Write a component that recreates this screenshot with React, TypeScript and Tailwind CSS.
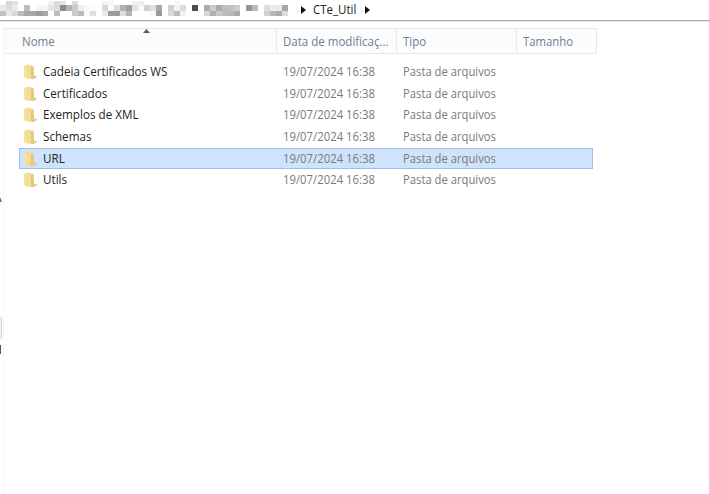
import React from "react";

type Row = { name: string; selected?: boolean };

const rows: Row[] = [
  { name: "Cadeia Certificados WS" },
  { name: "Certificados" },
  { name: "Exemplos de XML" },
  { name: "Schemas" },
  { name: "URL", selected: true },
  { name: "Utils" },
];

// Grey levels of the obscured part of the path, one string of hex pairs per line.
const mosaic = [
  "ff d8 e2 ff ff ff ff ff f2 dc e4 ff dd ff ff ff ff f4 f6 ff ff ff f2 ee ff ff ff ff ff f8 ff ff ff ff ff ff ff ff ff ff ff ff ff ff ff ff ff ff",
  "e8 de ea ff bc ff f4 f6 e6 dc 8a b4 cc ee f6 fa ff d8 fa dc b2 a0 e2 f8 d0 e0 a8 ff d2 f2 dc ff 4c ff ac cc aa be c2 cc ff 98 ba ff dd ec ea a8",
  "c0 e8 d8 ba a8 a8 9c a8 ff bc ff ff cc bc fa de ff ea 9a 9c de b4 ff ff ff f8 98 ff d8 bc f2 ff ff ff d6 b0 c8 bc b8 aa ff ff ff ff d0 b8 ac dc",
].map((line) => line.split(" "));

const mosaicHeights = ["flex h-1", "flex h-1.5", "flex h-[5px]"];

function Folder() {
  return (
    <svg className="h-4 w-[14.5px] shrink-0" viewBox="0 0 14.5 16">
      <defs>
        <linearGradient id="front" x1="0" x2="1">
          <stop offset="0" stopColor="#f5e4a0" />
          <stop offset="1" stopColor="#f0d987" />
        </linearGradient>
        <linearGradient id="back" x1="0" x2="0" y1="0" y2="1">
          <stop offset="0" stopColor="#f3e2a5" />
          <stop offset="1" stopColor="#e8ca62" />
        </linearGradient>
      </defs>
      <path d="M8 15 12.400 11.200l1.700 1.200-.8 1.400-3.600 1.400z" fill="#c6cacd" />
      <path d="M4 .8 9.600 1.300v12L6 14.500z" fill="url(#back)" />
      <path d="M7.500 3 10.800 2.200v11.600L7.500 15z" fill="#e0c987" />
      <path d="M8.300 8.500 11 8v5.400L8.300 14.600z" fill="#edcc50" />
      <path d="M1 2 5 .5l1.600 1.300V15.200L1 13.400z" fill="url(#front)" />
      <path d="M6.900 4v10.800" stroke="#fff2c4" strokeWidth=".7" />
    </svg>
  );
}

function Chevron() {
  return (
    <svg className="h-[8px] w-[5px]" viewBox="0 0 5 8">
      <path d="M0 0 5 4 0 8z" fill="#111" />
    </svg>
  );
}

export default function App() {
  return (
    <div className="flex h-[494px] w-[709px] flex-col overflow-hidden bg-white font-['Open_Sans','Noto_Sans',sans-serif] text-[12px] text-[#222]">
      <header className="flex h-[20px] shrink-0 items-start">
        <div className="w-[288px] pt-px">
          {mosaic.map((line, y) => (
            <div key={y} className={mosaicHeights[y]}>
              {line.map((c, x) => (
                <span key={x} className="h-full w-1.5" style={{ backgroundColor: `#${c}${c}${c}` }} />
              ))}
            </div>
          ))}
        </div>
        <div className="flex h-[19px] items-center pl-[13px]">
          <Chevron />
          <span className="ml-[7px] w-[52px] origin-left scale-x-[0.96] whitespace-nowrap">CTe_Util</span>
          <Chevron />
        </div>
      </header>
      <div className="h-[2px] shrink-0 border-t border-[#acacac] bg-[#e4e4e4]" />
      <div className="flex flex-1">
        <aside className="flex w-1 shrink-0 flex-col border-r border-[#f5f5f5]">
          <span className="-ml-[6px] mt-[168px] block h-4 leading-4">A</span>
          <span className="mt-[111px] h-[22px] w-[2px] border-y border-r border-[#dadada] bg-[#eee]" />
          <span className="mt-[6px] h-[9px] w-px bg-[#315f8d]" />
        </aside>
        <main className="flex flex-col">
          <div className="mt-[6px] flex h-[26px] w-[593px] border border-l-0 border-[#e8e8e8] bg-[#fcfcfc] leading-[25px] text-[#6d7f96]">
            <div className="relative w-[273px] border-r border-[#e8e8e8] pl-[18px]">
              <span className="block origin-left scale-x-[0.96]">Nome</span>
              <svg className="absolute left-[139px] top-0 h-1 w-[7px]" viewBox="0 0 7 4">
                <path d="M0 4 3.500 0 7 4z" fill="#48617d" />
              </svg>
            </div>
            <div className="w-[120px] whitespace-nowrap border-r border-[#e8e8e8] pl-[6px]">
              <span className="block origin-left scale-x-[0.96]">Data de modificaç...</span>
            </div>
            <div className="w-[120px] border-r border-[#e8e8e8] pl-[6px]">
              <span className="block origin-left scale-x-[0.96]">Tipo</span>
            </div>
            <div className="pl-[6px]">
              <span className="block origin-left scale-x-[0.945]">Tamanho</span>
            </div>
          </div>
          <div className="mt-[7px] flex flex-col pl-[15px]">
            {rows.map((row) => (
              <div
                key={row.name}
                className={`flex h-[21.7px] w-[574px] items-center border pl-[3px] ${row.selected ? "border-[#a0bde2] bg-[#cfe3fc]" : "border-transparent"}`}
              >
                <Folder />
                <span className="ml-[5.5px] w-[240px] origin-left scale-x-[0.97] whitespace-nowrap">{row.name}</span>
                <span className="w-[120px] origin-left scale-x-[0.944] whitespace-nowrap text-[#7a7a7a]">19/07/2024 16:38</span>
                <span className="origin-left scale-x-[0.938] whitespace-nowrap text-[#7a7a7a]">Pasta de arquivos</span>
              </div>
            ))}
          </div>
        </main>
      </div>
    </div>
  );
}
